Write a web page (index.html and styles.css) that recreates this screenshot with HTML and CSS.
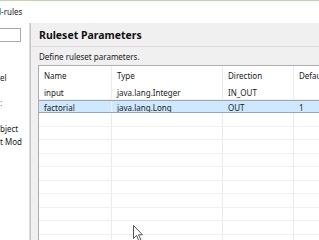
FILE: index.html
```html
<!DOCTYPE html>
<html>
<head>
<meta charset="utf-8">
<link rel="stylesheet" href="styles.css">
</head>
<body>
<div class="window">
  <div class="titlebar"><span class="title">l-rules</span></div>
  <div class="main">
    <div class="left">
      <div class="search"></div>
      <div class="lbl l1">el</div>
      <div class="lbl l2 blue">:</div>
      <div class="lbl l3">bject</div>
      <div class="lbl l4">t Mod</div>
    </div>
    <div class="sash"></div>
    <div class="right">
      <div class="header">Ruleset Parameters</div>
      <div class="body">
        <div class="desc">Define ruleset parameters.</div>
        <div class="table">
          <div class="row head">
            <div class="c c1">Name</div><div class="c c2">Type</div><div class="c c3">Direction</div><div class="c c4">Default</div>
          </div>
          <div class="row">
            <div class="c c1">input</div><div class="c c2">java.lang.Integer</div><div class="c c3">IN_OUT</div><div class="c c4"></div>
          </div>
          <div class="row sel">
            <div class="c c1">factorial</div><div class="c c2">java.lang.Long</div><div class="c c3">OUT</div><div class="c c4">1</div>
          </div>
          <div class="row empty"><div class="c c1"></div><div class="c c2"></div><div class="c c3"></div><div class="c c4"></div></div>
          <div class="row empty"><div class="c c1"></div><div class="c c2"></div><div class="c c3"></div><div class="c c4"></div></div>
          <div class="row empty"><div class="c c1"></div><div class="c c2"></div><div class="c c3"></div><div class="c c4"></div></div>
          <div class="row empty"><div class="c c1"></div><div class="c c2"></div><div class="c c3"></div><div class="c c4"></div></div>
          <div class="row empty"><div class="c c1"></div><div class="c c2"></div><div class="c c3"></div><div class="c c4"></div></div>
          <div class="row empty"><div class="c c1"></div><div class="c c2"></div><div class="c c3"></div><div class="c c4"></div></div>
          <div class="row empty"><div class="c c1"></div><div class="c c2"></div><div class="c c3"></div><div class="c c4"></div></div>
          <div class="row empty"><div class="c c1"></div><div class="c c2"></div><div class="c c3"></div><div class="c c4"></div></div>
          <div class="row empty"><div class="c c1"></div><div class="c c2"></div><div class="c c3"></div><div class="c c4"></div></div>
          <div class="row empty"><div class="c c1"></div><div class="c c2"></div><div class="c c3"></div><div class="c c4"></div></div>
        </div>
      </div>
    </div>
  </div>
  <svg class="cursor" width="11" height="17" viewBox="0 0 11 17">
    <path d="M0.5 0.5 L0.5 13.5 L3.5 10.5 L6 16 L8 15 L5.5 9.8 L9.5 9.8 Z" fill="#fff" stroke="#555" stroke-width="1"/>
  </svg>
</div>
</body>
</html>
```
FILE: styles.css
```css
* { box-sizing: border-box; }
html, body { margin: 0; padding: 0; }
body {
  width: 319px;
  height: 240px;
  overflow: hidden;
  background: #ffffff;
  font-family: "Noto Sans", "Liberation Sans", sans-serif;
  font-size: 8px;
  color: #1a1a1a;
}
.window {
  position: relative;
  width: 319px;
  height: 240px;
  overflow: hidden;
  border-top: 1px solid #bcd9a8;
}
.titlebar {
  height: 22px;
  display: flex;
  align-items: center;
  padding-left: 0;
}
.title { margin-left: -1px; margin-top: -2px; }
.main {
  display: flex;
  height: 217px;
}
.left {
  width: 29px;
  flex: none;
  overflow: hidden;
  position: relative;
  padding-top: 5px;
}
.search {
  width: 21px;
  height: 14px;
  border: 1px solid #a9a9a9;
  border-left: none;
  background: #fff;
}
.lbl { white-space: nowrap; height: 13px; line-height: 13px; }
.l1 { margin-top: 29px; }
.l2 { margin-top: 12px; }
.l3 { margin-top: 13px; }
.l4 { margin-top: 0; }
.blue { color: #1a66c9; }
.sash {
  width: 2px;
  flex: none;
  background: #dadada;
  border-right: 1px solid #c8c8c8;
}
.right {
  flex: 1;
  background: #f0f0f0;
  display: flex;
  flex-direction: column;
  min-width: 0;
}
.header {
  height: 24px;
  line-height: 24px;
  padding-left: 8px;
  font-weight: bold;
  font-size: 10.5px;
  color: #111;
  border-bottom: 1px solid #dcdcdc;
}
.body {
  padding: 3px 0 0 7px;
  flex: 1;
}
.desc {
  height: 14px;
  line-height: 14px;
  padding-left: 1px;
  margin-bottom: 1px;
}
.table {
  background: #fff;
  border-left: 1px solid #adadad;
  border-top: 1px solid #adadad;
  width: 300px;
  height: 200px;
}
.row {
  display: flex;
  height: 13.5px;
  line-height: 13px;
  border-bottom: 1px solid #f0f0f0;
}
.row.head { height: 20px; line-height: 20px; border-bottom: none; }
.c {
  flex: none;
  padding-left: 5px;
  white-space: nowrap;
  overflow: hidden;
  border-right: 1px solid #e8ecf2;
}
.c1 { width: 73px; }
.c2 { width: 111px; }
.c3 { width: 71px; }
.c4 { width: 60px; border-right: none; }
.row.sel {
  background: #cde8ff;
  border-top: 1px solid #9aa6b3;
  border-bottom: 1px solid #9aa6b3;
}
.row.sel .c { border-right-color: #cde8ff; }
.row.sel .c1 { border-right-color: #e8f3ff; }
.cursor { position: absolute; left: 133px; top: 224px; }
```
